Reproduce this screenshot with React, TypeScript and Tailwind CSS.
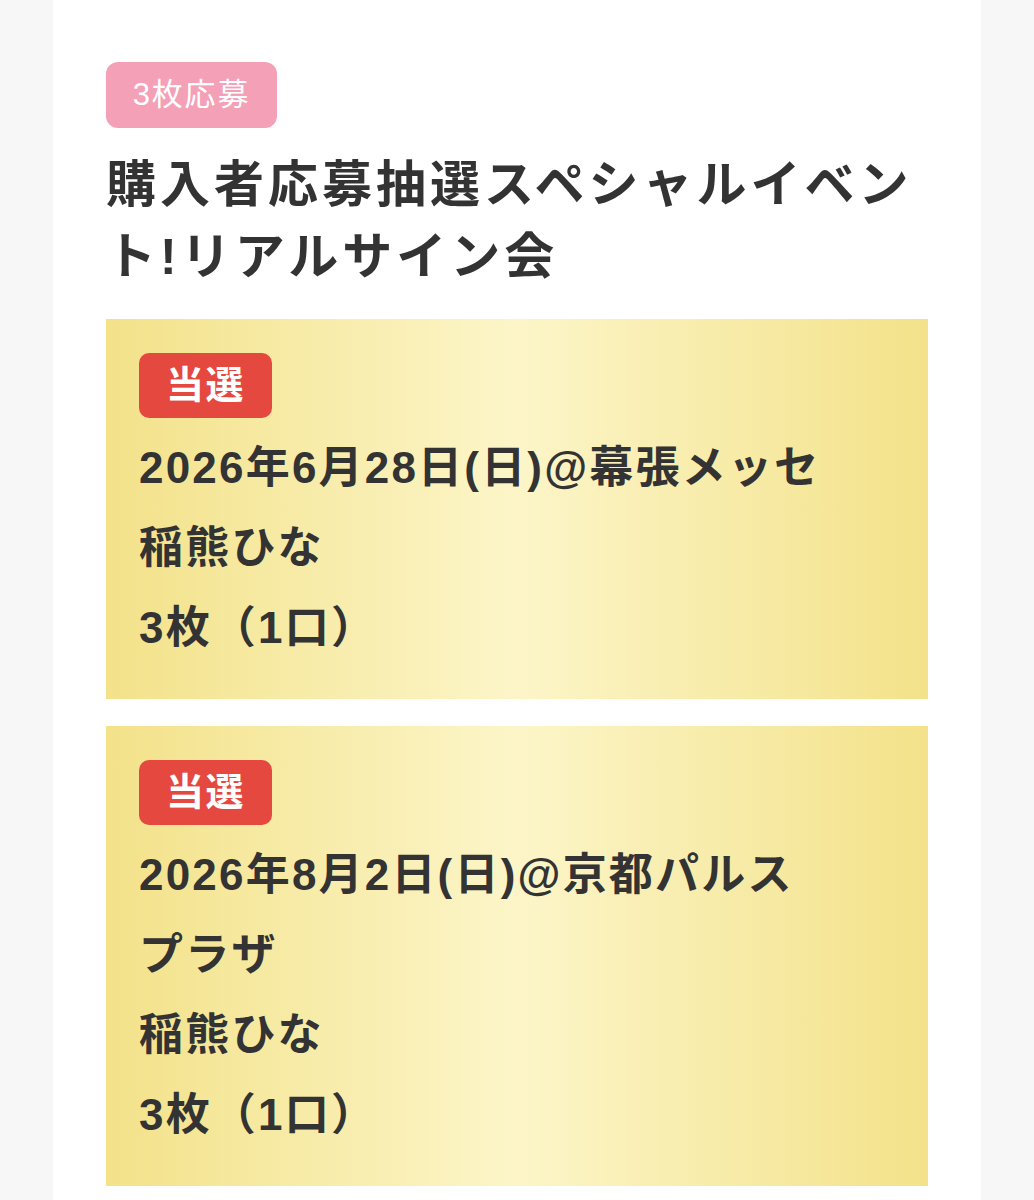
import React from 'react';

interface Entry {
    lines: string[];
}

const entries: Entry[] = [
    { lines: ['2026年6月28日(日)@幕張メッセ', '稲熊ひな', '3枚（1口）'] },
    { lines: ['2026年8月2日(日)@京都パルス', 'プラザ', '稲熊ひな', '3枚（1口）'] },
];

function ResultCard({ entry }: { entry: Entry }) {
    return (
        <div className="bg-[linear-gradient(90deg,#f3e28a_0%,#fcf5c8_50%,#f3e28a_100%)] pl-[33px] pr-6 pt-[34px] pb-[31px]">
            <div className="flex h-[65px] w-[133px] items-center justify-center rounded-[10px] bg-[#e5483f] text-[38px] font-bold tracking-[0.04em] text-white">
                当選
            </div>
            <div className="mt-[10px]">
                {entry.lines.map((line, i) => (
                    <p key={i} className="whitespace-nowrap text-[44px] font-bold leading-[80px] tracking-[0.05em] text-[#333333]">
                        {line}
                    </p>
                ))}
            </div>
        </div>
    );
}

export default function App() {
    return (
        <div
            className="min-h-[1200px] bg-[#f7f7f7]"
            style={{ fontFamily: '"Liberation Sans", "Noto Sans CJK JP", sans-serif' }}
        >
            <div className="mx-auto min-h-[1200px] w-[928px] bg-white px-[53px] pt-[62px]">
                {/* Entry count tag */}
                <div className="flex h-[66px] w-[171px] items-center justify-center rounded-[12px] bg-[#f4a0b6] text-[31px] tracking-[0.06em] text-white">
                    3枚応募
                </div>

                <h1 className="mt-[21px] text-[50px] font-bold leading-[72px] tracking-[0.08em] text-[#333333]">
                    <span className="block whitespace-nowrap">購入者応募抽選スペシャルイベン</span>
                    <span className="block whitespace-nowrap">ト!リアルサイン会</span>
                </h1>

                <div className="mt-[26px] flex flex-col gap-[27px]">
                    {entries.map((entry, i) => (
                        <ResultCard key={i} entry={entry} />
                    ))}
                </div>
            </div>
        </div>
    );
}
